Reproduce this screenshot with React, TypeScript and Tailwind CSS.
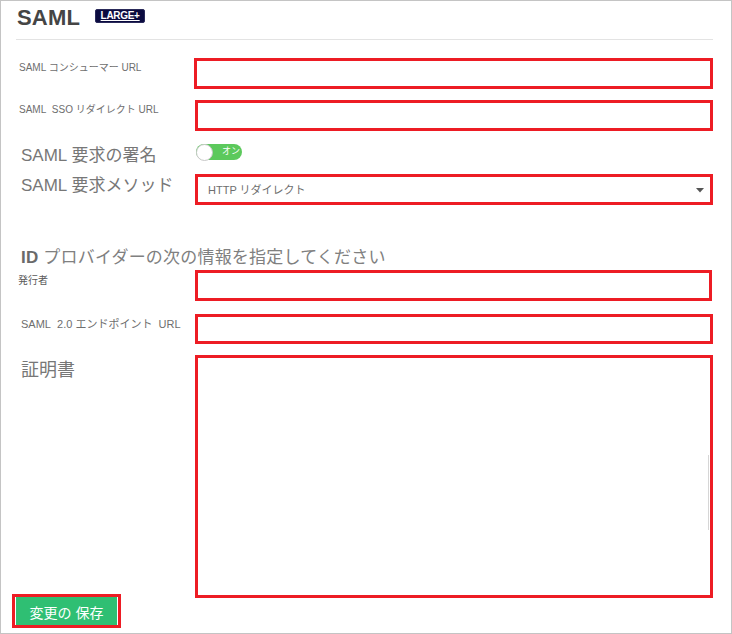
import React from "react";

const font = "font-['Liberation_Sans','Noto_Sans_CJK_JP',sans-serif]";

export default function App() {
  return (
    <div className={`w-[732px] h-[634px] border border-[#c4c4c4] bg-white overflow-hidden ${font}`}>
      <div className="pl-[15px] pr-[18px]">
        {/* Header */}
        <div className="mt-[6px] flex items-start h-[22px]">
          <span className="text-[22px] leading-[22px] font-bold text-[#454545] ml-[1px] tracking-[0.2px]">SAML</span>
          <span className="ml-[15px] mt-[2px] w-[50px] h-[14px] rounded-[2px] bg-[#0b0b40] border border-[#2a2a5a] flex items-center justify-center text-[10px] leading-[12px] font-bold text-white underline tracking-[-0.3px]">
            LARGE+
          </span>
        </div>
        <div className="mt-[10px] h-px bg-[#e3e3e3]" />

        {/* Row 1 */}
        <div className="mt-[18px] flex items-start">
          <div className="w-[178px] shrink-0 pl-[3px] pt-[4px] text-[10px] leading-[12px] text-[#6e6e6e]">SAML コンシューマー URL</div>
          <div className="w-[519px] h-[31px] border-[3px] border-[#ed1c24] bg-white" />
        </div>

        {/* Row 2 */}
        <div className="mt-[11px] flex items-start">
          <div className="w-[179px] shrink-0 pl-[3px] pt-[4px] text-[10px] leading-[12px] text-[#6e6e6e]">SAML&nbsp; SSO リダイレクト URL</div>
          <div className="w-[518px] h-[31px] border-[3px] border-[#ed1c24] bg-white" />
        </div>

        {/* Row 3 toggle */}
        <div className="mt-[13px] flex items-start h-[22px]">
          <div className="w-[180px] shrink-0 pl-[5px] pt-[2px] text-[17px] leading-[20px] text-[#777]">SAML 要求の署名</div>
          <div className="relative w-[46px] h-[16px] rounded-full bg-[#5cc95c]">
            <span className="absolute left-[26px] top-[1px] text-[9px] leading-[12px] text-white">オン</span>
            <span className="absolute left-0 top-[-0.5px] w-[17px] h-[17px] rounded-full bg-white border border-[#c8c8c8]" />
          </div>
        </div>

        {/* Row 4 select */}
        <div className="mt-[8px] flex items-start">
          <div className="w-[179px] shrink-0 pl-[5px] pt-[2px] text-[17px] leading-[20px] text-[#777]">SAML 要求メソッド</div>
          <div className="w-[518px] h-[31px] border-[3px] border-[#ed1c24] bg-white flex items-center justify-between pl-[10px] pr-[6px]">
            <span className="text-[11px] leading-[14px] text-[#6e6e6e]">HTTP リダイレクト</span>
            <svg width="8" height="5" viewBox="0 0 8 5" className="mt-[1px]">
              <path d="M0 0 L8 0 L4 4.5 Z" fill="#555" />
            </svg>
          </div>
        </div>

        {/* Heading */}
        <div className="mt-[41px] h-[24px] pl-[5px] text-[17px] leading-[24px] text-[#808080] tracking-[0.2px]">
          <span className="font-bold text-[#6a6a6a]">ID</span> プロバイダーの次の情報を指定してください
        </div>

        {/* Row 5 */}
        <div className="flex items-start">
          <div className="w-[179px] shrink-0 pl-[2px] pt-[5px] text-[10px] leading-[12px] text-[#5a5a5a]">発行者</div>
          <div className="w-[517px] h-[31px] border-[3px] border-[#ed1c24] bg-white" />
        </div>

        {/* Row 6 */}
        <div className="mt-[13px] flex items-start">
          <div className="w-[179px] shrink-0 pl-[5px] pt-[4px] text-[11px] leading-[13px] text-[#6e6e6e]">SAML&nbsp; 2.0 エンドポイント&nbsp; URL</div>
          <div className="w-[518px] h-[30px] border-[3px] border-[#ed1c24] bg-white" />
        </div>

        {/* Row 7 textarea */}
        <div className="mt-[11px] flex items-start">
          <div className="w-[179px] shrink-0 pl-[5px] pt-[3px] text-[18px] leading-[24px] text-[#777]">証明書</div>
          <div className="relative w-[520px] h-[243px] border-[3px] border-[#ed1c24] bg-white">
            <div className="absolute right-[1px] top-[97px] w-px h-[75px] bg-[#d6d6d6]" />
          </div>
        </div>

        {/* Save button */}
        <div className="mt-[-4px] ml-[-4px] w-[109px] h-[34px] border-[3px] border-[#ed1c24] bg-white px-[1px]">
          <div className="w-full h-full bg-[#2fbf73] flex items-center justify-center pt-[3px] text-[14px] leading-[18px] text-white">
            変更の 保存
          </div>
        </div>
      </div>
    </div>
  );
}
